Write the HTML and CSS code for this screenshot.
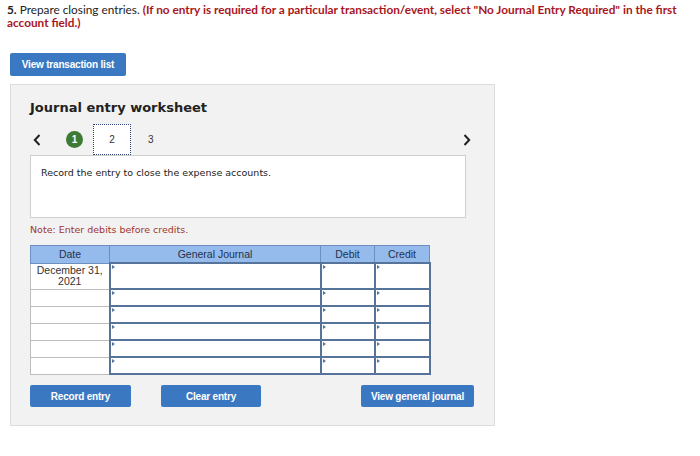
FILE: index.html
```html
<!DOCTYPE html>
<html>
<head>
<meta charset="utf-8">
<link rel="stylesheet" href="styles.css">
</head>
<body>
<p class="prompt"><b>5.</b> Prepare closing entries. <span class="warn">(If no entry is required for a particular transaction/event, select "No Journal Entry Required" in the first account field.)</span></p>
<button class="btn btn-list">View transaction list</button>
<div class="panel">
  <h2 class="title">Journal entry worksheet</h2>
  <div class="nav">
    <svg class="chev" width="8" height="12" viewBox="0 0 8 12"><path d="M6.5 1 L1.8 6 L6.5 11" fill="none" stroke="#222" stroke-width="2"/></svg>
    <span class="step done">1</span>
    <span class="step current">2</span>
    <span class="step third">3</span>
    <svg class="chev right" width="8" height="12" viewBox="0 0 8 12"><path d="M1.5 1 L6.2 6 L1.5 11" fill="none" stroke="#222" stroke-width="2"/></svg>
  </div>
  <div class="instr">Record the entry to close the expense accounts.</div>
  <p class="note">Note: Enter debits before credits.</p>
  <table class="journal">
    <thead>
      <tr><th class="c-date">Date</th><th class="c-gj">General Journal</th><th class="c-dr">Debit</th><th class="c-cr">Credit</th></tr>
    </thead>
    <tbody>
      <tr class="first"><td class="date">December 31,<br>2021</td><td class="in"><i></i></td><td class="in"><i></i></td><td class="in"><i></i></td></tr>
      <tr><td class="date"></td><td class="in"><i></i></td><td class="in"><i></i></td><td class="in"><i></i></td></tr>
      <tr><td class="date"></td><td class="in"><i></i></td><td class="in"><i></i></td><td class="in"><i></i></td></tr>
      <tr><td class="date"></td><td class="in"><i></i></td><td class="in"><i></i></td><td class="in"><i></i></td></tr>
      <tr><td class="date"></td><td class="in"><i></i></td><td class="in"><i></i></td><td class="in"><i></i></td></tr>
      <tr><td class="date"></td><td class="in"><i></i></td><td class="in"><i></i></td><td class="in"><i></i></td></tr>
    </tbody>
  </table>
  <div class="actions">
    <button class="btn btn-rec">Record entry</button>
    <button class="btn btn-clr">Clear entry</button>
    <button class="btn btn-view">View general journal</button>
  </div>
</div>
</body>
</html>
```

FILE: styles.css
```css
html, body { margin: 0; padding: 0; background: #fff; }
body { width: 700px; height: 456px; overflow: hidden; }

.prompt {
  margin: 0;
  width: 684px;
  padding: 3px 0 0 7px;
  font-family: Lato, "Liberation Sans", sans-serif;
  font-size: 11.8px;
  line-height: 13px;
  color: #222;
}
.prompt b { font-weight: 700; }
.warn { color: #a8161d; font-weight: 700; }

.btn {
  display: block;
  border: none;
  border-radius: 2px;
  background: #3b78c2;
  color: #fff;
  font-family: "Liberation Sans", Arial, sans-serif;
  font-weight: 700;
  font-size: 10px;
  height: 23px;
  padding: 0;
  letter-spacing: -0.2px;
}
.btn-list { margin: 24px 0 0 10px; width: 116px; }

.panel {
  margin: 8px 0 0 10px;
  width: 464px;
  height: 340px;
  background: #f2f2f2;
  border: 1px solid #dcdcdc;
  padding: 0 0 0 19px;
  box-sizing: content-box;
  font-family: "DejaVu Sans", Verdana, sans-serif;
}
.title {
  margin: 0;
  padding-top: 14px;
  font-family: "DejaVu Sans", Verdana, sans-serif;
  font-size: 13px;
  line-height: 17px;
  font-weight: 700;
  color: #222;
}
.nav {
  display: flex;
  align-items: center;
  width: 446px;
  height: 31px;
  margin-top: 8px;
  font-size: 10px;
  color: #333;
}
.chev { margin-left: 3px; display: block; }
.chev.right { margin-left: auto; margin-right: 5px; }
.step {
  display: flex; align-items: center; justify-content: center;
  font-family: "Liberation Sans", Arial, sans-serif;
}
.step.done {
  width: 17px; height: 17px; border-radius: 50%;
  background: #3d7a33; color: #fff; font-weight: 700;
  margin-left: 25px;
}
.step.current {
  width: 36px; height: 29px;
  background: #fff;
  border: 1px dotted #33447a;
  margin-left: 10px;
}
.step.third { margin-left: 17px; }

.instr {
  width: 414px;
  height: 40px;
  background: #fff;
  border: 1px solid #cfcfcf;
  padding: 11px 10px 10px 10px;
  font-family: "DejaVu Sans", Verdana, sans-serif;
  font-size: 9.5px;
  color: #222;
}
.note {
  margin: 6px 0 0 0;
  font-family: "DejaVu Sans", Verdana, sans-serif;
  font-size: 9.5px;
  line-height: 12px;
  color: #a0342f;
}
.journal {
  margin-top: 9px;
  border-collapse: collapse;
  font-family: "Liberation Sans", Arial, sans-serif;
  font-size: 10.5px;
  color: #333;
  width: 400px;
  table-layout: fixed;
}
.journal th {
  background: #94bbec;
  border: 1px solid #6d8fbf;
  height: 16px;
  padding: 0;
  font-weight: 400;
  color: #24324a;
}
.c-date { width: 78px; }
.c-gj { width: 210px; }
.c-dr { width: 53px; }
.c-cr { width: 54px; }
.journal td { padding: 0; height: 15px; background: #fff; }
.journal tr.first td { height: 24px; }
.journal td.date {
  border: 1px solid #bdbdbd;
  text-align: center;
  line-height: 11px;
  vertical-align: top;
  padding-top: 1px;
}
.journal tr.first td.date { height: 23px; }
.journal td.in {
  border: 2px solid #56739a;
  position: relative;
}
.journal td.in i {
  position: absolute;
  left: 1px; top: 1px;
  width: 0; height: 0;
  border-top: 2px solid transparent;
  border-bottom: 2px solid transparent;
  border-left: 3px solid #56739a;
}
.actions {
  display: flex;
  margin-top: 10px;
}
.btn-rec { width: 101px; height: 22px; }
.btn-clr { width: 100px; height: 22px; margin-left: 30px; }
.btn-view { width: 113px; height: 22px; margin-left: 100px; }
```
